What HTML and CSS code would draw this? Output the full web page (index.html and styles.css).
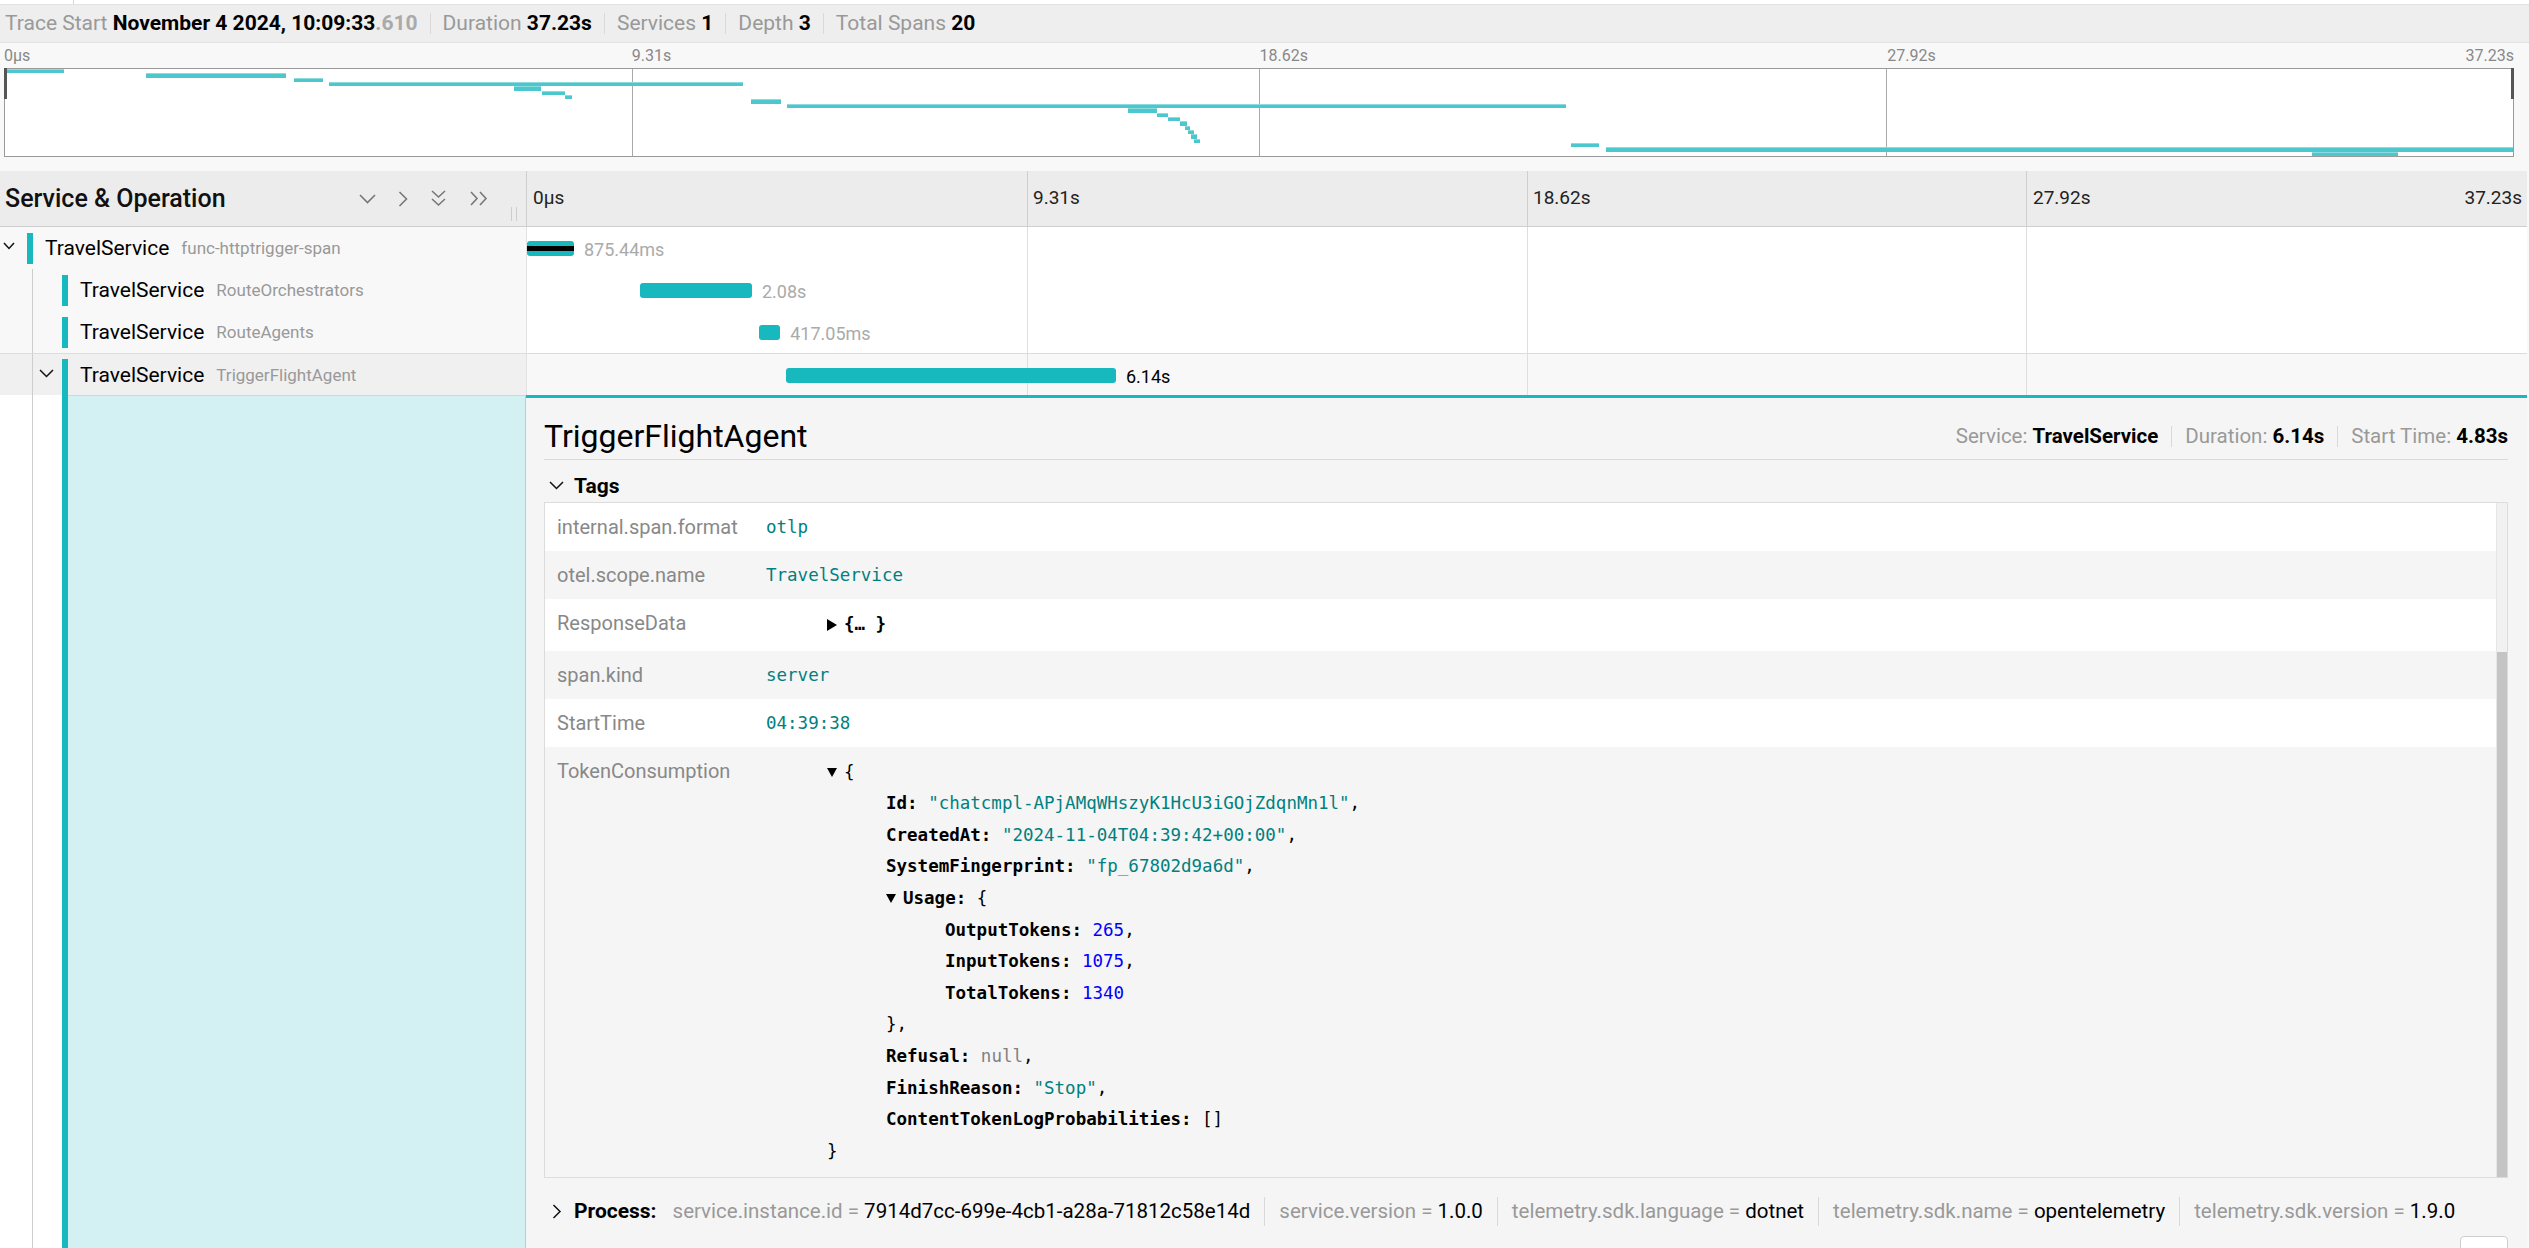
FILE: index.html
```html
<!DOCTYPE html>
<html lang="en">
<head>
<meta charset="utf-8">
<title>Trace</title>
<link rel="stylesheet" href="styles.css">
</head>
<body>
<div class="topstrip"><div class="tab"></div></div>
<header class="overview">
  <div class="ov-item first"><span class="ov-label">Trace Start</span> <b>November 4 2024, 10:09:33<span class="ms">.610</span></b></div>
  <div class="ov-item"><span class="ov-label">Duration</span> <b>37.23s</b></div>
  <div class="ov-item"><span class="ov-label">Services</span> <b>1</b></div>
  <div class="ov-item"><span class="ov-label">Depth</span> <b>3</b></div>
  <div class="ov-item"><span class="ov-label">Total Spans</span> <b>20</b></div>
</header>

<section class="minimap">
  <div class="mm-ticks">
    <div class="mm-tick">0µs</div>
    <div class="mm-tick">9.31s</div>
    <div class="mm-tick">18.62s</div>
    <div class="mm-tick last"><span>27.92s</span><span>37.23s</span></div>
  </div>
  <div class="mm-canvas">
    <div class="mm-col"></div><div class="mm-col"></div><div class="mm-col"></div><div class="mm-col"></div>
    <div class="mm-bar" style="top:0%;left:0.04%;width:2.3%"></div>
    <div class="mm-bar" style="top:5%;left:5.62%;width:5.58%"></div>
    <div class="mm-bar" style="top:10%;left:11.52%;width:1.16%"></div>
    <div class="mm-bar" style="top:15%;left:12.92%;width:16.51%"></div>
    <div class="mm-bar" style="top:20%;left:20.3%;width:1.08%"></div>
    <div class="mm-bar" style="top:25%;left:21.41%;width:0.92%"></div>
    <div class="mm-bar" style="top:30%;left:22.33%;width:0.28%"></div>
    <div class="mm-bar" style="top:35%;left:29.74%;width:1.2%"></div>
    <div class="mm-bar" style="top:40%;left:31.18%;width:31.06%"></div>
    <div class="mm-bar" style="top:45%;left:44.78%;width:1.16%"></div>
    <div class="mm-bar" style="top:50%;left:45.93%;width:0.44%"></div>
    <div class="mm-bar" style="top:55%;left:46.37%;width:0.48%"></div>
    <div class="mm-bar" style="top:60%;left:46.85%;width:0.28%"></div>
    <div class="mm-bar" style="top:65%;left:47.05%;width:0.2%"></div>
    <div class="mm-bar" style="top:70%;left:47.17%;width:0.24%"></div>
    <div class="mm-bar" style="top:75%;left:47.29%;width:0.24%"></div>
    <div class="mm-bar" style="top:80%;left:47.41%;width:0.24%"></div>
    <div class="mm-bar" style="top:85%;left:62.44%;width:1.12%"></div>
    <div class="mm-bar" style="top:90%;left:63.84%;width:36.16%"></div>
    <div class="mm-bar" style="top:95%;left:91.99%;width:3.43%"></div>
    <div class="mm-handle left"></div>
    <div class="mm-handle right"></div>
  </div>
</section>

<section class="trace-table">
  <div class="thead">
    <div class="th-name">
      <h3>Service &amp; Operation</h3>
      <div class="th-icons">
        <svg class="ico" width="17" height="10" viewBox="0 0 17 10"><polyline points="1,1 8.5,8.5 16,1"/></svg>
        <svg class="ico" width="10" height="16" viewBox="0 0 10 16"><polyline points="1.5,1 8.5,8 1.5,15"/></svg>
        <svg class="ico" width="17" height="17" viewBox="0 0 17 17"><polyline points="2,1 8.5,7 15,1"/><polyline points="2,9 8.5,15 15,9"/></svg>
        <svg class="ico" width="20" height="15" viewBox="0 0 20 15"><polyline points="2,1 8,7.5 2,14"/><polyline points="11,1 17,7.5 11,14"/></svg>
      </div>
      <div class="resizer"></div>
    </div>
    <div class="th-timeline">
      <div class="th-tick">0µs</div>
      <div class="th-tick">9.31s</div>
      <div class="th-tick">18.62s</div>
      <div class="th-tick last"><span>27.92s</span><span>37.23s</span></div>
    </div>
  </div>

  <div class="row">
    <div class="name-cell">
      <div class="toggle"><svg class="chev" width="12" height="8" viewBox="0 0 12 8"><polyline points="1,1 6,6.5 11,1"/></svg></div>
      <div class="svc-bar"></div>
      <span class="svc">TravelService</span><span class="op">func-httptrigger-span</span>
    </div>
    <div class="bar-cell">
      <div class="bar-wrap" style="left:0%;width:2.35%"><div class="span-bar crit"></div><span class="bar-label">875.44ms</span></div>
    </div>
  </div>

  <div class="row">
    <div class="name-cell">
      <div class="offset"><div class="guide"></div></div>
      <div class="svc-bar"></div>
      <span class="svc">TravelService</span><span class="op">RouteOrchestrators</span>
    </div>
    <div class="bar-cell">
      <div class="bar-wrap" style="left:5.65%;width:5.6%"><div class="span-bar"></div><span class="bar-label">2.08s</span></div>
    </div>
  </div>

  <div class="row">
    <div class="name-cell">
      <div class="offset"><div class="guide"></div></div>
      <div class="svc-bar"></div>
      <span class="svc">TravelService</span><span class="op">RouteAgents</span>
    </div>
    <div class="bar-cell">
      <div class="bar-wrap" style="left:11.6%;width:1.06%"><div class="span-bar"></div><span class="bar-label">417.05ms</span></div>
    </div>
  </div>

  <div class="row expanded">
    <div class="name-cell">
      <div class="offset"><div class="guide"></div><svg class="chev sub" width="15" height="9" viewBox="0 0 15 9"><polyline points="1,1 7.5,7.5 14,1"/></svg></div>
      <div class="svc-bar tail"></div>
      <span class="svc">TravelService</span><span class="op">TriggerFlightAgent</span>
    </div>
    <div class="bar-cell">
      <div class="bar-wrap" style="left:12.95%;width:16.5%"><div class="span-bar"></div><span class="bar-label">6.14s</span></div>
    </div>
  </div>

  <div class="detail-row">
    <div class="detail-name">
      <div class="offset"><div class="guide"></div></div>
      <div class="svc-bar full"></div>
      <div class="accent"></div>
    </div>
    <div class="detail-info">
      <div class="title-row">
        <h2>TriggerFlightAgent</h2>
        <div class="meta">
          <div class="meta-item"><span class="ov-label">Service:</span> <b>TravelService</b></div>
          <div class="meta-item"><span class="ov-label">Duration:</span> <b>6.14s</b></div>
          <div class="meta-item"><span class="ov-label">Start Time:</span> <b>4.83s</b></div>
        </div>
      </div>

      <div class="section-head">
        <svg class="chev" width="15" height="9" viewBox="0 0 15 9"><polyline points="1,1 7.5,7.5 14,1"/></svg>
        <strong>Tags</strong>
      </div>

      <div class="kv-wrap">
        <div class="kv-table">
          <div class="kv-row"><div class="kv-key">internal.span.format</div><div class="kv-val">otlp</div></div>
          <div class="kv-row"><div class="kv-key">otel.scope.name</div><div class="kv-val">TravelService</div></div>
          <div class="kv-row"><div class="kv-key">ResponseData</div><div class="kv-val json"><div class="jl"><span class="tri-r"></span><span class="jb">{… }</span></div></div></div>
          <div class="kv-row"><div class="kv-key">span.kind</div><div class="kv-val">server</div></div>
          <div class="kv-row"><div class="kv-key">StartTime</div><div class="kv-val">04:39:38</div></div>
          <div class="kv-row"><div class="kv-key">TokenConsumption</div>
            <div class="kv-val json">
              <div class="jl"><span class="tri-d"></span>{</div>
              <div class="jc">
                <div class="jl"><span class="jk">Id:</span> <span class="js">"chatcmpl-APjAMqWHszyK1HcU3iGOjZdqnMn1l"</span>,</div>
                <div class="jl"><span class="jk">CreatedAt:</span> <span class="js">"2024-11-04T04:39:42+00:00"</span>,</div>
                <div class="jl"><span class="jk">SystemFingerprint:</span> <span class="js">"fp_67802d9a6d"</span>,</div>
                <div class="jl"><span class="tri-d"></span><span class="jk">Usage:</span> {</div>
                <div class="jc">
                  <div class="jl"><span class="jk">OutputTokens:</span> <span class="jn">265</span>,</div>
                  <div class="jl"><span class="jk">InputTokens:</span> <span class="jn">1075</span>,</div>
                  <div class="jl"><span class="jk">TotalTokens:</span> <span class="jn">1340</span></div>
                </div>
                <div class="jl">},</div>
                <div class="jl"><span class="jk">Refusal:</span> <span class="jnull">null</span>,</div>
                <div class="jl"><span class="jk">FinishReason:</span> <span class="js">"Stop"</span>,</div>
                <div class="jl"><span class="jk">ContentTokenLogProbabilities:</span> []</div>
              </div>
              <div class="jl">}</div>
            </div>
          </div>
        </div>
        <div class="scrollbar"><div class="thumb"></div></div>
      </div>

      <div class="process">
        <svg class="chev" width="10" height="15" viewBox="0 0 10 15"><polyline points="1.5,1 8,7.5 1.5,14"/></svg>
        <strong>Process:</strong>
        <div class="proc-items">
          <div class="proc-item"><span class="pk">service.instance.id</span> <span class="pk">=</span> 7914d7cc-699e-4cb1-a28a-71812c58e14d</div>
          <div class="proc-item"><span class="pk">service.version</span> <span class="pk">=</span> 1.0.0</div>
          <div class="proc-item"><span class="pk">telemetry.sdk.language</span> <span class="pk">=</span> dotnet</div>
          <div class="proc-item"><span class="pk">telemetry.sdk.name</span> <span class="pk">=</span> opentelemetry</div>
          <div class="proc-item"><span class="pk">telemetry.sdk.version</span> <span class="pk">=</span> 1.9.0</div>
        </div>
      </div>

      <div class="footer-bits">
        <div class="copy-btn"></div>
      </div>
    </div>
  </div>
</section>
</body>
</html>
```
FILE: styles.css
```css
* { box-sizing: border-box; }
html, body { margin: 0; padding: 0; }
body {
  width: 2529px;
  height: 1248px;
  overflow: hidden;
  background: #f8f8f8;
  font-family: Roboto, "Noto Sans", sans-serif;
  color: #000;
}

/* top strip */
.topstrip { height: 5px; background: #fff; border-bottom: 1px solid #e2e2e2; }
.tab { width: 74px; height: 4px; border-right: 1px solid #d6d6d6; }

/* overview header */
.overview {
  height: 38px;
  background: #eeeeee;
  border-bottom: 1px solid #e2e2e2;
  display: flex;
  align-items: center;
  font-size: 21px;
}
.ov-item {
  padding: 0 12px;
  line-height: 21px;
  border-left: 1px solid #d9d9d9;
  white-space: nowrap;
}
.ov-item.first { padding-left: 5px; border-left: none; }
.ov-label { color: #999; }
.ms { color: #aaa; }

/* minimap */
.minimap { padding: 0 15px 14px 4px; }
.mm-ticks {
  height: 25px;
  display: grid;
  grid-template-columns: repeat(4, 1fr);
  align-items: center;
  font-size: 16px;
  color: #888;
  margin-left: -1px;
}
.mm-tick { padding-left: 1px; }
.mm-tick.last { display: flex; justify-content: space-between; }
.mm-canvas {
  position: relative;
  height: 89px;
  background: #fff;
  border: 1px solid #9a9a9a;
  display: grid;
  grid-template-columns: repeat(4, 1fr);
}
.mm-col + .mm-col { border-left: 1px solid #aaa; }
.mm-bar {
  position: absolute;
  height: 4.4px;
  background: #4cc7cd;
  border-top: 1px solid #8edbdf;
}
.mm-handle { position: absolute; top: -1px; width: 3px; height: 31px; background: #555; }
.mm-handle.left { left: -1px; }
.mm-handle.right { right: -1px; }

/* trace table */
.trace-table { width: 2527px; }
.thead {
  display: grid;
  grid-template-columns: 526px 1fr;
  height: 56px;
  background: #ececec;
  border-bottom: 1px solid #cfcfcf;
}
.th-name {
  display: flex;
  align-items: center;
  padding-left: 5px;
  padding-right: 9px;
}
.th-name h3 {
  margin: 0;
  font-size: 25px;
  font-weight: 500;
  color: #111;
}
.th-icons {
  margin-left: auto;
  display: flex;
  align-items: center;
  gap: 22px;
}
.ico { fill: none; stroke: #777; stroke-width: 1.6; }
.resizer {
  align-self: flex-end;
  margin: 0 0 5px 22px;
  width: 6px;
  height: 14px;
  border-left: 1px solid #cdcdcd;
  border-right: 1px solid #cdcdcd;
}
.th-timeline {
  border-left: 1px solid #cfcfcf;
  display: grid;
  grid-template-columns: repeat(4, 1fr);
  align-items: center;
  font-size: 19px;
  color: #222;
  background-image:
    linear-gradient(#cfcfcf, #cfcfcf),
    linear-gradient(#cfcfcf, #cfcfcf),
    linear-gradient(#cfcfcf, #cfcfcf);
  background-repeat: no-repeat;
  background-size: 1px 100%;
  background-position: 25% 0, 50% 0, 75% 0;
}
.th-tick { padding-left: 6px; padding-bottom: 2px; }
.th-tick.last { display: flex; justify-content: space-between; padding-right: 5px; }

.row {
  display: grid;
  grid-template-columns: 526px 1fr;
  height: 42px;
}
.name-cell {
  background: #f8f8f8;
  display: flex;
  align-items: center;
  white-space: nowrap;
}
.toggle {
  width: 27px;
  align-self: flex-start;
  padding: 15px 0 0 3px;
}
.chev { fill: none; stroke: #111; stroke-width: 1.5; display: block; }
.offset {
  width: 62px;
  height: 100%;
  padding-left: 32px;
  display: flex;
  align-items: flex-start;
}
.guide { width: 1px; height: 100%; background: #cdcdcd; }
.chev.sub { margin: 15px 0 0 6px; }
.svc-bar { width: 6px; height: 31px; background: #17b8be; flex: none; }
.svc-bar.tail { align-self: flex-end; height: 36px; }
.svc { margin-left: 12px; font-size: 21px; color: #000; }
.op { margin-left: 12px; font-size: 17px; color: #999; }

.bar-cell {
  position: relative;
  background-color: #fff;
  border-left: 1px solid #e2e2e2;
  background-image:
    linear-gradient(#dedede, #dedede),
    linear-gradient(#dedede, #dedede),
    linear-gradient(#dedede, #dedede);
  background-repeat: no-repeat;
  background-size: 1px 100%;
  background-position: 25% 0, 50% 0, 75% 0;
}
.bar-wrap { position: absolute; top: 14px; height: 15px; }
.span-bar { height: 100%; background: #17b8be; border-radius: 3px; }
.span-bar.crit {
  background: linear-gradient(#17b8be 0, #17b8be 34%, #000 34%, #000 67%, #17b8be 67%);
}
.bar-label {
  position: absolute;
  left: calc(100% + 10px);
  top: 50%;
  transform: translateY(-50%);
  font-size: 18px;
  color: #aaa;
  white-space: nowrap;
}
.row.expanded { border-top: 1px solid #dcdcdc; }
.row.expanded .name-cell { background: #f0f0f0; }
.row.expanded .bar-cell { background-color: #f8f8f8; }
.row.expanded .bar-label { color: #000; }

/* detail */
.detail-row {
  display: grid;
  grid-template-columns: 526px 1fr;
  min-height: 860px;
}
.detail-name { display: flex; background: #fff; }
.svc-bar.full { height: auto; }
.accent {
  flex: 1;
  background: #d3f0f2;
  border-top: 1px solid #b7e2e5;
  border-right: 1px solid #c9c9c9;
}
.detail-info {
  background: #f5f5f5;
  border-top: 3px solid #17b8be;
  padding: 18px 19px 0 18px;
}
.title-row {
  display: flex;
  align-items: center;
  justify-content: space-between;
  border-bottom: 1px solid #dadada;
  padding-bottom: 2px;
}
.title-row h2 {
  margin: 0;
  font-size: 32px;
  font-weight: 400;
  line-height: 41px;
}
.meta { display: flex; font-size: 20.5px; }
.meta-item { padding: 0 13px; line-height: 21px; border-left: 1px solid #d9d9d9; }
.meta-item:first-child { border-left: none; }
.meta-item:last-child { padding-right: 0; }

.section-head {
  margin-top: 11px;
  height: 29px;
  display: flex;
  align-items: center;
  font-size: 21px;
  margin-bottom: 2px;
}
.section-head .chev { margin: 0 10px 0 5px; }

.kv-wrap {
  display: flex;
  border: 1px solid #dcdcdc;
  background: #fff;
}
.kv-table { flex: 1; }
.kv-row {
  display: grid;
  grid-template-columns: 221px 1fr;
  padding: 10px 0;
}
.kv-row:nth-child(even) { background: #f5f5f5; }
.kv-key {
  padding-left: 12px;
  font-size: 20px;
  line-height: 28px;
  color: #888;
}
.kv-val {
  font-family: "DejaVu Sans Mono", "Liberation Mono", monospace;
  font-size: 17.5px;
  line-height: 28px;
  color: #008080;
  white-space: nowrap;
}
.kv-val.json { color: #000; line-height: 31.6px; padding-left: 61px; }
.jl { white-space: pre; }
.jc { padding-left: 59px; }
.jk { font-weight: 700; }
.jb { font-weight: 700; }
.js { color: #008080; }
.jn { color: #0000ff; }
.jnull { color: #808080; }
.tri-d {
  display: inline-block;
  width: 0; height: 0;
  border-top: 9px solid #000;
  border-left: 5px solid transparent;
  border-right: 5px solid transparent;
  margin-right: 7px;
  vertical-align: 1px;
}
.tri-r {
  display: inline-block;
  width: 0; height: 0;
  border-left: 10px solid #000;
  border-top: 6px solid transparent;
  border-bottom: 6px solid transparent;
  margin-right: 7px;
  vertical-align: -1px;
}
.scrollbar {
  width: 11px;
  background: #f1f1f1;
  border-left: 1px solid #e6e6e6;
  display: flex;
  flex-direction: column;
  justify-content: flex-end;
}
.thumb { height: 525px; background: #c4c4c4; }

.process {
  margin-top: 18px;
  height: 30px;
  display: flex;
  align-items: center;
  font-size: 20.5px;
  white-space: nowrap;
}
.process .chev { margin: 0 12px 0 8px; }
.process strong { font-size: 21px; }
.proc-items { display: flex; }
.proc-item { padding: 0 14px; line-height: 29px; border-left: 1px solid #d9d9d9; }
.proc-item:first-child { padding-left: 16px; border-left: none; }
.pk { color: #999; }

.footer-bits {
  margin-top: 10px;
  display: flex;
  justify-content: flex-end;
}
.copy-btn {
  width: 48px;
  height: 34px;
  border: 1px solid #cfcfcf;
  border-radius: 4px;
  background: #fff;
}
```
